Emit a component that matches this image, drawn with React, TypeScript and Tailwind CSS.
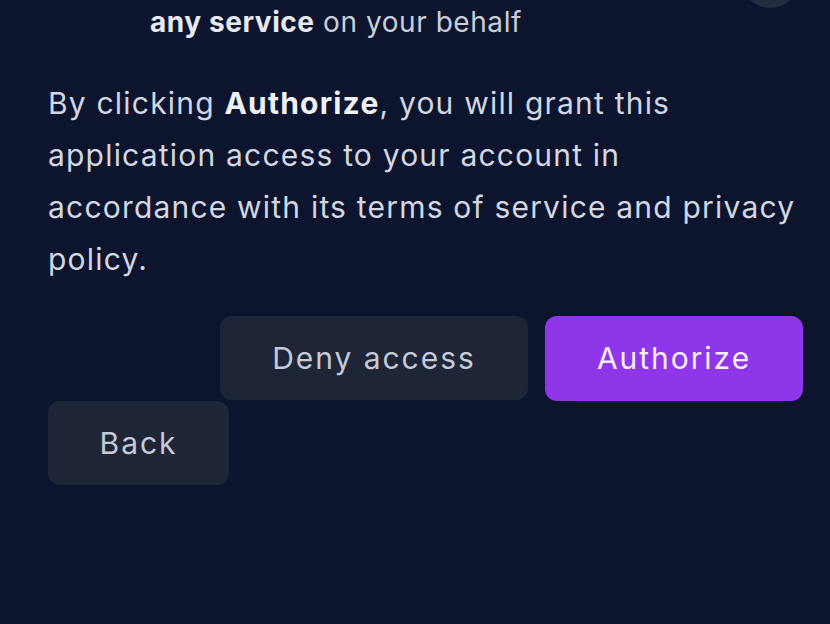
import React from 'react';

export default function App() {
  return (
    <div className="relative h-[624px] w-[830px] overflow-hidden bg-[#0d152e] font-['Inter',sans-serif]">
      {/* close button peeking in from above */}
      <div className="absolute right-[31px] top-[-52px] h-[60px] w-[58px] rounded-full bg-[#242c3f]" />

      <div className="pl-[150px] pt-[4px] text-[28px] leading-[36px] tracking-[0.02em] text-[#c9ceda]">
        <span className="font-bold text-[#e6e9f0]">any service</span> on your behalf
      </div>

      <p className="mt-[37px] pl-[48px] pr-[20px] text-[30px] leading-[52px] tracking-[0.04em] text-[#d3d7e1]">
        By clicking <span className="font-bold text-[#eef0f5]">Authorize</span>, you will grant this
        <br />
        application access to your account in
        <br />
        accordance with its terms of service and privacy
        <br />
        policy.
      </p>

      <div className="mt-[31px] flex flex-col px-[27px]">
        <div className="flex justify-end gap-[17px]">
          <button className="h-[84px] w-[308px] rounded-[12px] bg-[#1e2536] text-[30px] tracking-[0.065em] text-[#c5cad6]">
            Deny access
          </button>
          <button className="h-[85px] w-[258px] rounded-[12px] bg-[#9036ea] text-[30px] tracking-[0.065em] text-[#f4eefe]">
            Authorize
          </button>
        </div>
        <div className="pl-[21px]">
          <button className="h-[84px] w-[181px] rounded-[12px] bg-[#1e2536] text-[30px] tracking-[0.065em] text-[#c5cad6]">
            Back
          </button>
        </div>
      </div>
    </div>
  );
}
